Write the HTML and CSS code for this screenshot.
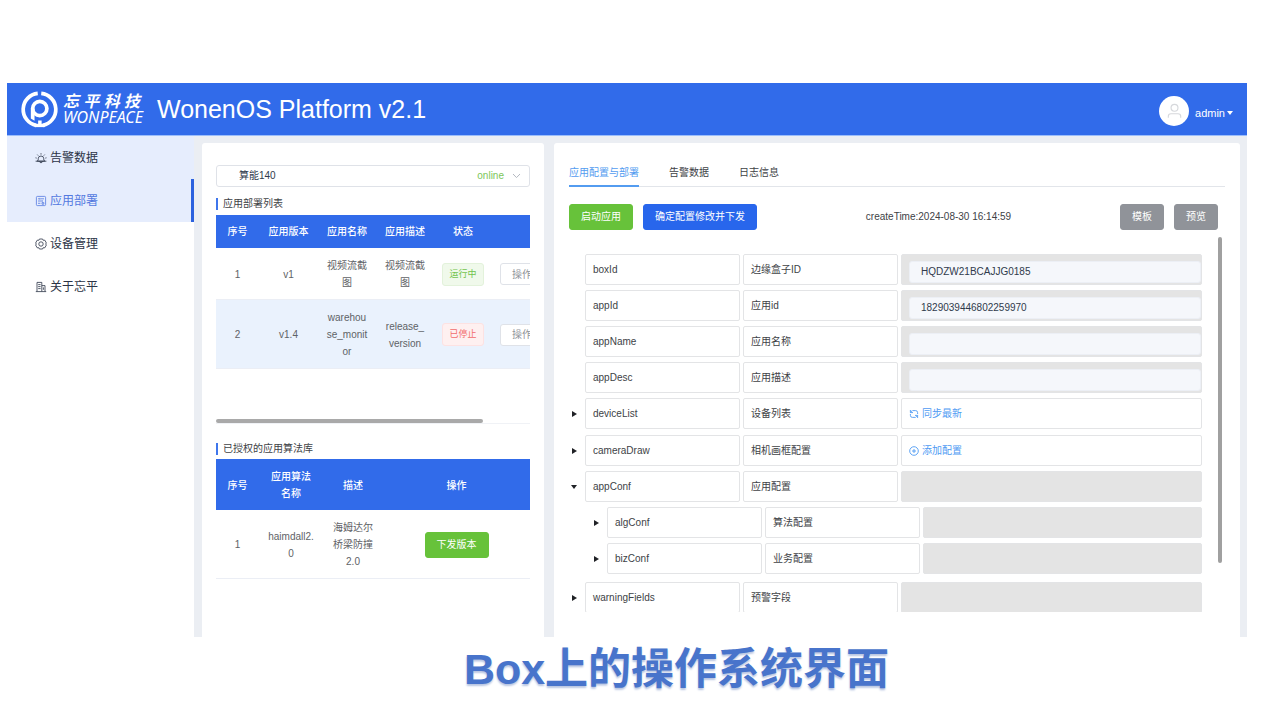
FILE: index.html
```html
<!DOCTYPE html>
<html lang="zh-CN">
<head>
<meta charset="utf-8">
<title>WonenOS Platform v2.1</title>
<link rel="stylesheet" href="styles.css">
</head>
<body>
<div class="slide">
  <div class="app">
    <header class="topbar">
      <div class="brand">
        <svg class="brand-mark" viewBox="0 0 38 38" aria-hidden="true">
          <path d="M20.8 2.5A16.6 16.6 0 0 1 22.4 35.3M17.2 2.5A16.6 16.6 0 0 0 15.6 35.3" fill="none" stroke="#fff" stroke-width="3.8"/>
          <circle cx="19.3" cy="18" r="7.3" fill="none" stroke="#fff" stroke-width="3.8"/>
          <path d="M10.1 18h3.8v12.6l-3.8-2.4zM17.6 30.4h3.6v4h-3.6z" fill="#fff"/>
          <path d="M14 35.4h10.4" stroke="#fff" stroke-width="3.4"/>
        </svg>
        <div class="brand-name">
          <div class="brand-cn"><span>忘</span><span>平</span><span>科</span><span>技</span></div>
          <div class="brand-en">WONPEACE</div>
        </div>
      </div>
      <h1 class="title">WonenOS Platform v2.1</h1>
      <button class="user" type="button">
        <span class="avatar">
          <svg viewBox="0 0 16 16" fill="none" stroke="#d6d8dc" stroke-width="1.2" aria-hidden="true"><circle cx="8" cy="4.6" r="3.7"/><path d="M1.4 15.2v-1.6c0-1.6 1.2-2.7 2.8-2.7h7.6c1.6 0 2.8 1.1 2.8 2.7v1.6"/></svg>
        </span>
        <span class="user-name">admin<svg class="caret" viewBox="0 0 6 4" aria-hidden="true"><path d="M0 0h6L3 4z" fill="#fff"/></svg></span>
      </button>
    </header>

    <div class="body">
      <nav class="sidebar">
        <a class="nav-item hovered" href="#">
          <svg viewBox="0 0 12 12" fill="none" stroke="currentColor" stroke-width=".8" aria-hidden="true"><path d="M3.2 8V6.8a2.8 2.8 0 0 1 5.6 0V8l1 1.2H2.2zM.6 9.2h10.8M4.6 9.4c0 1.8 2.8 1.8 2.8 0M6 1.2v1.4M2.3 2.6l.9 1M9.7 2.6l-.9 1M.5 5.8l1.2.3M11.5 5.8l-1.2.3"/></svg>
          <span>告警数据</span>
        </a>
        <a class="nav-item active" href="#">
          <svg viewBox="0 0 12 12" fill="none" stroke="currentColor" stroke-width=".8" aria-hidden="true"><rect x="1.4" y="1.4" width="9.2" height="9.2" rx="1"/><path d="M3 3.8h1.4M4.8 2.9v1.8M5.4 3.8H9M3 6h3.6M7.2 5.1v1.8M3 8.3h2.4M7 7.6h1.8v1.6H7z"/></svg>
          <span>应用部署</span>
        </a>
        <a class="nav-item" href="#">
          <svg viewBox="0 0 12 12" fill="none" stroke="currentColor" stroke-width=".8" aria-hidden="true"><path d="M4.4 1h3.2l.6 1.3 1.6-.1L11.4 5l-.8 1 .8 1-1.6 2.8-1.6-.1L7.6 11H4.4l-.6-1.3-1.6.1L.6 7l.8-1-.8-1 1.6-2.8 1.6.1z"/><circle cx="6" cy="6" r="2.2"/></svg>
          <span>设备管理</span>
        </a>
        <a class="nav-item" href="#">
          <svg viewBox="0 0 12 12" fill="none" stroke="currentColor" stroke-width=".8" aria-hidden="true"><path d="M.8 10.6h10.4M2 10.4v-9h4.8v9M6.8 4.6H10v5.8M3.2 3.6h2.4M3.2 5.6h2.4M3.2 7.6h2.4M8.4 6.4v2.4"/></svg>
          <span>关于忘平</span>
        </a>
      </nav>

      <main class="content">
        <section class="panel devices">
          <button class="device-select" type="button">
            <span class="device-name">算能140</span>
            <span class="online">online</span>
            <svg viewBox="0 0 8 6" fill="none" stroke="#b4b8c0" aria-hidden="true"><path d="M.5 1L4 4.6 7.5 1"/></svg>
          </button>

          <h2 class="section-title">应用部署列表</h2>
          <div class="table-scroll">
            <table class="grid deploy">
              <colgroup><col class="w-index"><col class="w-version"><col class="w-cell"><col class="w-cell"><col class="w-cell"><col class="w-op"></colgroup>
              <thead><tr><th>序号</th><th>应用版本</th><th>应用名称</th><th>应用描述</th><th>状态</th><th></th></tr></thead>
              <tbody>
                <tr><td>1</td><td>v1</td><td>视频流截图</td><td>视频流截图</td><td><span class="tag running">运行中</span></td><td><button class="op" type="button">操作</button></td></tr>
                <tr class="current"><td>2</td><td>v1.4</td><td>warehouse_monitor</td><td>release_<wbr>version</td><td><span class="tag stopped">已停止</span></td><td><button class="op" type="button">操作</button></td></tr>
              </tbody>
            </table>
            <div class="h-thumb"></div>
          </div>

          <h2 class="section-title">已授权的应用算法库</h2>
          <table class="grid algorithms">
            <colgroup><col class="w-index"><col class="w-algo"><col class="w-desc"><col></colgroup>
            <thead><tr><th>序号</th><th>应用算法名称</th><th>描述</th><th>操作</th></tr></thead>
            <tbody><tr><td>1</td><td>haimdall2.0</td><td>海姆达尔桥梁防撞2.0</td><td><button class="btn green" type="button">下发版本</button></td></tr></tbody>
          </table>
        </section>

        <section class="panel config">
          <div class="tabs" role="tablist">
            <button class="tab selected" type="button" role="tab" aria-selected="true">应用配置与部署</button>
            <button class="tab" type="button" role="tab">告警数据</button>
            <button class="tab" type="button" role="tab">日志信息</button>
          </div>
          <div class="toolbar">
            <button class="btn green" type="button">启动应用</button>
            <button class="btn blue" type="button">确定配置修改并下发</button>
            <span class="created">createTime:2024-08-30 16:14:59</span>
            <button class="btn gray" type="button">模板</button>
            <button class="btn gray" type="button">预览</button>
          </div>

          <div class="tree-wrap">
            <div class="tree">
              <div class="row"><span class="arrow"></span><span class="cell">boxId</span><label class="cell" for="boxId">边缘盒子ID</label><span class="cell value locked"><input id="boxId" type="text" value="HQDZW21BCAJJG0185" readonly></span></div>
              <div class="row"><span class="arrow"></span><span class="cell">appId</span><label class="cell" for="appId">应用id</label><span class="cell value locked"><input id="appId" type="text" value="1829039446802259970" readonly></span></div>
              <div class="row"><span class="arrow"></span><span class="cell">appName</span><label class="cell" for="appName">应用名称</label><span class="cell value locked"><input id="appName" type="text" readonly></span></div>
              <div class="row"><span class="arrow"></span><span class="cell">appDesc</span><label class="cell" for="appDesc">应用描述</label><span class="cell value locked"><input id="appDesc" type="text" readonly></span></div>
              <div class="row list"><span class="arrow closed"></span><span class="cell">deviceList</span><span class="cell">设备列表</span><span class="cell value"><a class="link" href="#"><svg viewBox="0 0 10 10" fill="none" stroke="currentColor" stroke-width=".9" aria-hidden="true"><path d="M3.4 1.6H6.6A2 2 0 0 1 8.6 3.6V5M1.4 1v2.6H4M1.4 3.4L3 1.8M6.6 8.4H3.4A2 2 0 0 1 1.4 6.4V5M8.6 9V6.4H6M8.6 6.6L7 8.2"/></svg>同步最新</a></span></div>
              <div class="row"><span class="arrow closed"></span><span class="cell">cameraDraw</span><span class="cell">相机画框配置</span><span class="cell value"><a class="link" href="#"><svg viewBox="0 0 10 10" fill="none" stroke="currentColor" stroke-width=".9" aria-hidden="true"><circle cx="5" cy="5" r="4.3"/><path d="M5 3v4M3 5h4"/></svg>添加配置</a></span></div>
              <div class="row"><span class="arrow open"></span><span class="cell">appConf</span><span class="cell">应用配置</span><span class="cell value locked"></span></div>
              <div class="children">
                <div class="row"><span class="arrow closed"></span><span class="cell">algConf</span><span class="cell">算法配置</span><span class="cell value locked"></span></div>
                <div class="row"><span class="arrow closed"></span><span class="cell">bizConf</span><span class="cell">业务配置</span><span class="cell value locked"></span></div>
              </div>
              <div class="row"><span class="arrow closed"></span><span class="cell">warningFields</span><span class="cell">预警字段</span><span class="cell value locked"></span></div>
            </div>
            <div class="v-thumb"></div>
          </div>
        </section>
      </main>
    </div>
  </div>
  <p class="caption">Box上的操作系统界面</p>
</div>
</body>
</html>
```

FILE: styles.css
```css
* { box-sizing: border-box; }

body {
  margin: 0;
  background: #fff;
  color: #404246;
  font: 10px/16px "Liberation Sans", "Noto Sans CJK SC", sans-serif;
}

button, input { font: inherit; color: inherit; margin: 0; }
button { cursor: pointer; }
a { color: inherit; text-decoration: none; }

.slide {
  display: flex;
  flex-direction: column;
  height: 100vh;
  padding: 83px 33px 0 7px;
}

.app { flex: 1; min-height: 0; display: flex; flex-direction: column; }

/* Top bar */
.topbar {
  display: flex;
  align-items: center;
  height: 53px;
  padding: 0 14px;
  background: #316bea;
  border-bottom: 1px solid #9bbdfb;
  color: #fff;
}
.brand { display: flex; align-items: center; gap: 5px; }
.brand-mark { width: 37px; height: 37px; }
.brand-name { width: 80px; }
.brand-cn {
  display: flex;
  justify-content: space-between;
  padding-right: 3px;
  font: italic 700 16px/17px "Noto Sans CJK SC", sans-serif;
}
.brand-en { font: italic 400 16px/17px "Noto Sans", sans-serif; }
.title { margin: 0 auto 0 14px; font-size: 25px; line-height: 32px; font-weight: 400; }
.user {
  display: flex;
  align-items: center;
  gap: 6px;
  padding: 4px 0 0;
  border: 0;
  background: none;
  color: #fff;
  font-size: 11px;
}
.avatar {
  display: flex;
  align-items: center;
  justify-content: center;
  width: 30px;
  height: 30px;
  border-radius: 50%;
  background: #fff;
}
.avatar svg { width: 15px; height: 16px; }
.user-name { display: flex; align-items: center; gap: 2px; padding-top: 3px; }
.caret { width: 6px; height: 4px; }

/* Shell */
.body { flex: 1; min-height: 0; display: flex; }
.sidebar { flex: 0 0 187px; background: #fff; }
.nav-item {
  display: flex;
  align-items: center;
  gap: 3px;
  height: 43px;
  padding-left: 28px;
  color: #2b3346;
  font-size: 12px;
}
.nav-item svg { width: 12px; height: 12px; }
.hovered { background: #e6edfd; }
.active { background: #e6edfd; color: #5379e0; border-right: 3px solid #2c62de; }

.content {
  flex: 1;
  display: grid;
  grid-template-columns: 342fr 686fr;
  gap: 10px;
  min-width: 0;
  min-height: 0;
  padding: 7px 7px 0 8px;
  background: #ebeef3;
}
.panel {
  min-width: 0;
  min-height: 0;
  overflow: hidden;
  background: #fff;
  border-radius: 3px 3px 0 0;
}

/* Left panel */
.devices { padding: 22px 14px 0; }
.device-select {
  display: flex;
  align-items: center;
  width: 100%;
  height: 22px;
  padding: 0 8px 0 22px;
  border: 1px solid #dfe2e8;
  border-radius: 3px;
  background: #fff;
  color: #303a4c;
}
.device-name { margin-right: auto; }
.online { margin-right: 8px; color: #7cc65a; }
.device-select svg { width: 9px; height: 6px; }

.section-title {
  display: flex;
  align-items: center;
  margin: 11px 0 5px;
  height: 12px;
  padding-left: 5px;
  border-left: 2px solid #3f76ec;
  font-size: 10px;
  font-weight: 400;
}
.devices .table-scroll + .section-title { margin: 19px 0 4px; }

.table-scroll { height: 209px; overflow: hidden; display: flex; flex-direction: column; border-bottom: 1px solid #f0f2f6; }
.grid { width: 100%; table-layout: fixed; border-collapse: separate; border-spacing: 0; text-align: center; }
.deploy { width: 371px; }
.w-index { width: 43px; }
.w-version { width: 59px; }
.w-cell { width: 58px; }
.w-op { width: 95px; }
.w-algo { width: 64px; }
.w-desc { width: 60px; }
.grid th {
  padding: 8px;
  background: #316bea;
  color: #fff;
  font-weight: 500;
  line-height: 17px;
}
.algorithms th { padding-top: 9px; }
.grid td {
  padding: 9px 8px 8px;
  border-bottom: 1px solid #ebeef5;
  color: #606266;
  line-height: 17px;
  overflow-wrap: break-word;
}
.current td { background: #eaf2fd; }
.tag {
  display: inline-flex;
  align-items: center;
  justify-content: center;
  width: 42px;
  height: 23px;
  border: 1px solid #e3f2db;
  border-radius: 3px;
  background: #f0f9eb;
  color: #72c44d;
  font-size: 9px;
  vertical-align: middle;
}
.stopped { border-color: #fde2e2; background: #fef0f0; color: #f26c6c; }
.op {
  display: block;
  width: 78px;
  height: 22px;
  padding: 0 0 0 11px;
  border: 1px solid #dfe2e8;
  border-radius: 3px;
  background: #fff;
  color: #909399;
  text-align: left;
}
.h-thumb { width: 85%; height: 4px; margin-top: auto; border-radius: 2px; background: #a9a9a9; }

.btn {
  height: 26px;
  padding: 0 11px;
  border: 1px solid;
  border-radius: 3px;
  color: #fff;
  white-space: nowrap;
}
.green { background: #67c23a; border-color: #67c23a; }
.blue { background: #2866ec; border-color: #2866ec; }
.gray { background: #909399; border-color: #909399; }

/* Right panel */
.config { display: flex; flex-direction: column; padding: 18px 15px 25px; }
.tabs { display: flex; gap: 30px; border-bottom: 1px solid #e2e5ea; }
.tab {
  height: 26px;
  margin-bottom: -1px;
  padding: 0;
  border: 0;
  border-bottom: 2px solid transparent;
  background: none;
}
.selected { color: #539cf0; border-bottom-color: #539cf0; }
.toolbar { display: flex; align-items: center; gap: 10px; padding: 17px 7px 7px 0; }
.created { margin: 0 auto; }

.tree-wrap { flex: 1; min-height: 0; display: flex; gap: 16px; padding-right: 3px; overflow: hidden; }
.tree { flex: 1; min-width: 0; display: flex; flex-direction: column; gap: 5px; padding-top: 17px; }
.row { display: flex; flex: none; gap: 3px; }
.list { margin-bottom: 1px; }
.arrow { display: flex; align-items: center; flex: 0 0 13px; padding-left: 3px; }
.closed::before {
  content: "";
  border: 3px solid transparent;
  border-left: 5px solid #202226;
  border-right: 0;
}
.open::before {
  content: "";
  margin-left: -1px;
  border: 3px solid transparent;
  border-top: 4px solid #202226;
  border-bottom: 0;
}
.cell {
  display: flex;
  align-items: center;
  flex: 0 0 155px;
  height: 31px;
  padding: 0 7px;
  border: 1px solid #e3e4e6;
  border-radius: 2px;
}
.value { flex: 1; min-width: 0; }
.locked { padding: 5px 0 1px 7px; background: #e4e4e4; }
.locked input {
  width: 100%;
  height: 22px;
  padding: 0 11px;
  border: 1px solid #eceff5;
  border-radius: 3px;
  background: #f5f7fb;
  color: #303a4c;
  outline: 0;
}
.children { display: flex; flex-direction: column; gap: 5px; margin-bottom: 3px; padding-left: 22px; }
.link { display: flex; align-items: center; gap: 3px; color: #4f9bf3; }
.link svg { width: 10px; height: 10px; }
.v-thumb { width: 4px; height: 87%; border-radius: 2px; background: #a0a0a0; }

.caption {
  margin: 0;
  height: 83px;
  padding-left: 99px;
  color: #4874cb;
  font-size: 43px;
  font-weight: 700;
  line-height: 64px;
  text-align: center;
  text-shadow: 0 2px 2px #b9c6e2;
}
```
